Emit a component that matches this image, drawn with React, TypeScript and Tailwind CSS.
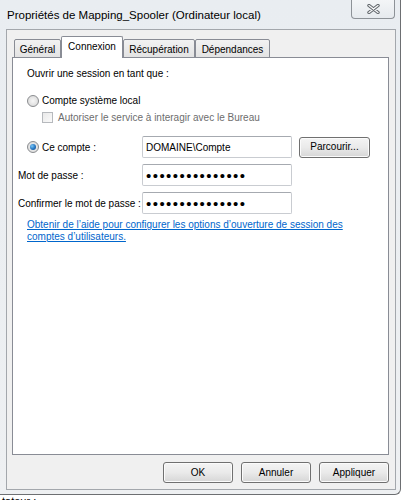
import React from "react";

function Radio({ checked }: { checked?: boolean }) {
  return (
    <span className="relative flex h-[12px] w-[12px] shrink-0 items-center justify-center rounded-full border border-[#8a8c8f] bg-radial from-[#f7f7f7] to-[#d4d4d4]">
      {checked && (
        <span className="h-[6px] w-[6px] rounded-full bg-radial-[at_35%_35%] from-[#7cc8f5] via-[#2a7bc6] to-[#0d3f7a]" />
      )}
    </span>
  );
}

function Field({ children }: { children: React.ReactNode }) {
  return (
    <div className="flex h-[22px] w-[150px] items-center rounded-[2px] border border-[#c9ccd1] border-t-[#a6aab0] bg-white pl-[3px]">
      {children}
    </div>
  );
}

function Dots() {
  return (
    <span className="text-[15px] leading-none tracking-[1.45px] text-black">
      •••••••••••••••
    </span>
  );
}

function Button({ label, w = "w-[70px]" }: { label: string; w?: string }) {
  return (
    <button
      className={`${w} h-[21px] rounded-[3px] border border-[#707070] bg-linear-to-b from-[#f4f4f4] via-[#eaeaea] to-[#d6d6d6] text-[10px] leading-none text-black shadow-[inset_0_0_0_1px_#fbfbfb]`}
    >
      {label}
    </button>
  );
}

export default function App() {
  const tabs = [
    { label: "Général", w: "w-[47px]" },
    { label: "Connexion", w: "w-[62px]", active: true },
    { label: "Récupération", w: "w-[72px]" },
    { label: "Dépendances", w: "w-[75px]" },
  ];

  return (
    <div className="relative h-[500px] w-[403px] overflow-hidden bg-white font-['Liberation_Sans','Arial',sans-serif]">
      {/* Window */}
      <div className="flex h-[495px] w-[401px] flex-col rounded-br-[6px] border-r border-b border-[#6d6f72] bg-linear-to-b from-[#e9edf1] to-[#eef0f2]">
        {/* Title bar */}
        <div className="flex h-[29px] items-start">
          <span className="pl-[7px] pt-[9px] text-[11.5px] leading-[13px] text-black">
            Propriétés de Mapping_Spooler (Ordinateur local)
          </span>
          <div className="ml-auto mr-[5px] flex h-[19px] w-[44px] items-center justify-center rounded-b-[4px] border border-t-0 border-[#8d9297] bg-linear-to-b from-[#f3f5f7] to-[#e6eaee]">
            <svg width="13" height="10" viewBox="0 0 13 10">
              <path d="M2 1.5 L11 8.5 M11 1.5 L2 8.5" stroke="#5f6469" strokeWidth="3.4" strokeLinecap="round" />
              <path d="M2 1.5 L11 8.5 M11 1.5 L2 8.5" stroke="#f4f5f6" strokeWidth="1.4" strokeLinecap="round" />
            </svg>
          </div>
        </div>

        {/* Dialog body */}
        <div className="ml-[6px] flex h-[461px] w-[390px] flex-col border border-[#a3a7ac] bg-[#f0f0f0] pl-[5px] pr-[6px] pt-[6px]">
          {/* Tabs */}
          <div className="relative z-10 -mb-px flex h-[22px] items-end pl-[2px]">
            {tabs.map((t) =>
              t.active ? (
                <div
                  key={t.label}
                  className={`${t.w} flex h-[22px] items-start justify-center rounded-t-[2px] border border-b-0 border-[#898c95] bg-white pt-[4px] text-[10px] leading-[12px] text-black`}
                >
                  {t.label}
                </div>
              ) : (
                <div
                  key={t.label}
                  className={`${t.w} flex h-[19px] items-start justify-center rounded-t-[2px] border border-[#898c95] bg-linear-to-b from-[#f2f2f2] to-[#e3e3e3] pt-[4px] text-[10px] leading-[12px] text-black`}
                >
                  {t.label}
                </div>
              )
            )}
          </div>

          {/* Panel */}
          <div className="flex h-[398px] flex-col border border-[#898c95] bg-white text-[10px] leading-[13px] text-black">
            <div className="ml-[14px] mt-[9px] h-[13px]">Ouvrir une session en tant que :</div>

            <div className="ml-[14px] mt-[14px] flex h-[13px] items-center gap-[3px]">
              <Radio />
              <span>Compte système local</span>
            </div>

            <div className="ml-[29px] mt-[4px] flex h-[13px] items-center gap-[5px]">
              <span className="h-[11px] w-[11px] border border-[#b6b9bd] bg-linear-to-br from-[#e9e9e9] to-[#fafafa]" />
              <span className="text-[#6d6d6d]">Autoriser le service à interagir avec le Bureau</span>
            </div>

            <div className="mt-[12px] flex h-[22px] items-center">
              <div className="ml-[14px] flex w-[115px] items-center gap-[3px]">
                <Radio checked />
                <span>Ce compte :</span>
              </div>
              <Field>
                <span>DOMAINE\Compte</span>
              </Field>
              <div className="ml-[7px]">
                <Button label="Parcourir..." w="w-[71px]" />
              </div>
            </div>

            <div className="mt-[6px] flex h-[22px] items-center">
              <div className="ml-[5px] w-[124px]">Mot de passe :</div>
              <Field>
                <Dots />
              </Field>
            </div>

            <div className="mt-[6px] flex h-[22px] items-center">
              <div className="ml-[5px] w-[124px]">Confirmer le mot de passe :</div>
              <Field>
                <Dots />
              </Field>
            </div>

            <a className="ml-[14px] mt-[5px] block leading-[12px] text-[#0066cc] underline">
              Obtenir de l’aide pour configurer les options d’ouverture de session des
              <br />
              comptes d’utilisateurs.
            </a>
          </div>

          {/* Buttons */}
          <div className="mt-[7px] flex justify-end gap-[8px]">
            <Button label="OK" />
            <Button label="Annuler" />
            <Button label="Appliquer" />
          </div>
        </div>
      </div>
      <div className="pl-[2px] text-[11px] leading-[12px] text-black">tateur :</div>
    </div>
  );
}
